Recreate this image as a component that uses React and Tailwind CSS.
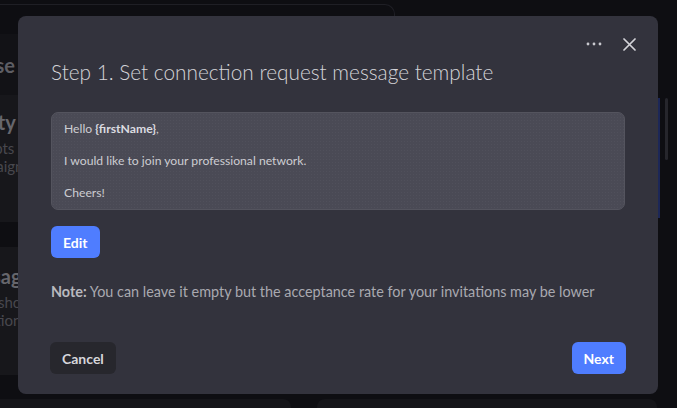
import React from "react";

function Background() {
  return (
    <div className="h-[408px] w-full overflow-hidden bg-[#0e0e12]">
      <div className="flex gap-[24px]">
        <div className="w-[330px] shrink-0 -ml-[40px]">
          <div className="h-[4px]" />
          <div className="h-[30px] w-[435px] rounded-tr-[10px] border-t border-r border-[#1f1f25]" />
          <div className="flex h-[61px] items-center bg-[#121216]">
            <span className="-ml-[12px] text-[20px] font-bold text-[#5e5e64]">Choose</span>
          </div>
          <div className="h-[127px] bg-[#17171b] pt-[12px]">
            <div className="-ml-[14px] text-[20px] font-bold text-[#66666c]">Activity</div>
            <div className="mt-[2px] text-[15px] leading-[18px] text-[#48484e]">
              <div className="-ml-[6px]">Attempts</div>
              <div className="-ml-[2px]">Campaign</div>
              <div className="-ml-[3px]">Yours</div>
            </div>
          </div>
          <div className="h-[25px]" />
          <div className="h-[128px] bg-[#17171b] pt-[14px]">
            <div className="-ml-[6px] text-[20px] font-bold text-[#66666c]">Message</div>
            <div className="mt-[2px] text-[15px] leading-[18px] text-[#48484e]">
              <div className="-ml-[4px]">Add a short</div>
              <div className="-ml-[12px]">connection</div>
            </div>
          </div>
        </div>
      </div>
    </div>
  );
}

function Dots() {
  return (
    <svg width="16" height="4" viewBox="0 0 16 4" fill="#c9c9cf">
      <circle cx="2" cy="2" r="1.4" />
      <circle cx="8" cy="2" r="1.4" />
      <circle cx="14" cy="2" r="1.4" />
    </svg>
  );
}

function CloseIcon() {
  return (
    <svg width="13" height="13" viewBox="0 0 13 13" stroke="#d4d4d9" strokeWidth="1.7" strokeLinecap="round">
      <path d="M1 1L12 12M12 1L1 12" />
    </svg>
  );
}

export default function App() {
  return (
    <div className="relative h-[408px] w-[677px] overflow-hidden" style={{ fontFamily: "Lato, 'Noto Sans', sans-serif" }}>
      <Background />

      {/* right side panel edge */}
      <div className="absolute left-[658px] top-[98px] h-[120px] w-[2px] bg-[#1c2757]" />
      <div className="absolute left-[665px] top-[98px] h-[62px] w-[3px] rounded bg-[#26262c]" />

      {/* bottom cards */}
      <div className="absolute left-0 top-[399px] flex w-full gap-[26px]">
        <div className="h-[20px] w-[291px] rounded-tr-[8px] bg-[#151519]" />
        <div className="h-[20px] w-[340px] rounded-t-[8px] bg-[#151519]" />
      </div>

      {/* modal */}
      <div className="absolute left-[18px] top-[16px] flex h-[378px] w-[640px] flex-col rounded-[8px] bg-[#33333d] pl-[33px] pr-[32px] pt-[22px] pb-[20px]">
        <div className="-mr-[10px] flex h-[12px] items-center justify-end gap-[21px]">
          <Dots />
          <CloseIcon />
        </div>
        <h2 className="mt-[8px] text-[20.8px] font-light leading-[28px] text-[#d3d3d8]">
          Step 1. Set connection request message template
        </h2>

        <div className="mt-[26px] h-[98px] w-[574px] rounded-[7px] border border-[#54545e] bg-[#4a4a55] bg-[radial-gradient(rgba(255,255,255,0.035)_1px,transparent_1px)] bg-[size:3px_3px] pl-[12px] pt-[8px] text-[12.2px] leading-[16px] text-[#cdcdd2]">
          <p>
            Hello <span className="font-bold text-[#dcdce0]">{"{firstName}"}</span>,
          </p>
          <p className="mt-[16px]">I would like to join your professional network.</p>
          <p className="mt-[16px]">Cheers!</p>
        </div>

        <div className="mt-[16px]">
          <button className="h-[32px] rounded-[6px] bg-[#4f7dff] px-[12px] text-[14px] font-bold text-white">
            Edit
          </button>
        </div>

        <p className="mt-[25px] text-[14.4px] leading-[18px] text-[#a9a9b0]">
          <span className="font-bold text-[#b9b9bf]">Note:</span> You can leave it empty but the acceptance rate for your invitations may be lower
        </p>

        <div className="mt-auto flex items-center justify-between">
          <button className="-ml-[1px] h-[32px] rounded-[6px] bg-[#27272d] px-[12px] text-[14px] font-bold text-[#d6d6db]">
            Cancel
          </button>
          <button className="h-[32px] rounded-[6px] bg-[#4f7dff] px-[12px] text-[14px] font-bold text-white">
            Next
          </button>
        </div>
      </div>
    </div>
  );
}
